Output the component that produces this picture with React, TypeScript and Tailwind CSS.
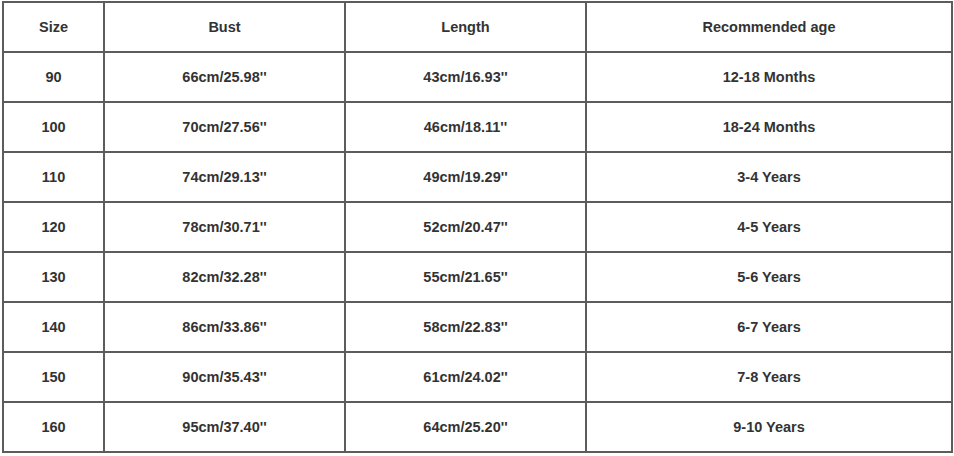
const rows = [
  ["90", "66cm/25.98''", "43cm/16.93''", "12-18 Months"],
  ["100", "70cm/27.56''", "46cm/18.11''", "18-24 Months"],
  ["110", "74cm/29.13''", "49cm/19.29''", "3-4 Years"],
  ["120", "78cm/30.71''", "52cm/20.47''", "4-5 Years"],
  ["130", "82cm/32.28''", "55cm/21.65''", "5-6 Years"],
  ["140", "86cm/33.86''", "58cm/22.83''", "6-7 Years"],
  ["150", "90cm/35.43''", "61cm/24.02''", "7-8 Years"],
  ["160", "95cm/37.40''", "64cm/25.20''", "9-10 Years"],
];

const headers = ["Size", "Bust", "Length", "Recommended age"];

export default function App() {
  return (
    <div className="h-[456px] w-[954px] bg-white pl-[2px] pt-[1px] font-['Liberation_Sans',Arial,sans-serif] text-[14.5px] font-bold text-[#333]">
      <table className="w-[949px] table-fixed border-collapse">
        <colgroup>
          <col className="w-[101px]" />
          <col className="w-[241px]" />
          <col className="w-[241px]" />
          <col className="w-[366px]" />
        </colgroup>
        <thead>
          <tr className="h-[50px]">
            {headers.map((h) => (
              <th key={h} className="border-2 border-[#5c5c5c] pt-[1px] text-center font-bold">
                {h}
              </th>
            ))}
          </tr>
        </thead>
        <tbody>
          {rows.map((r) => (
            <tr key={r[0]} className="h-[50px]">
              {r.map((c, i) => (
                <td key={i} className="border-2 border-[#5c5c5c] pt-[1px] text-center">
                  {c}
                </td>
              ))}
            </tr>
          ))}
        </tbody>
      </table>
    </div>
  );
}
